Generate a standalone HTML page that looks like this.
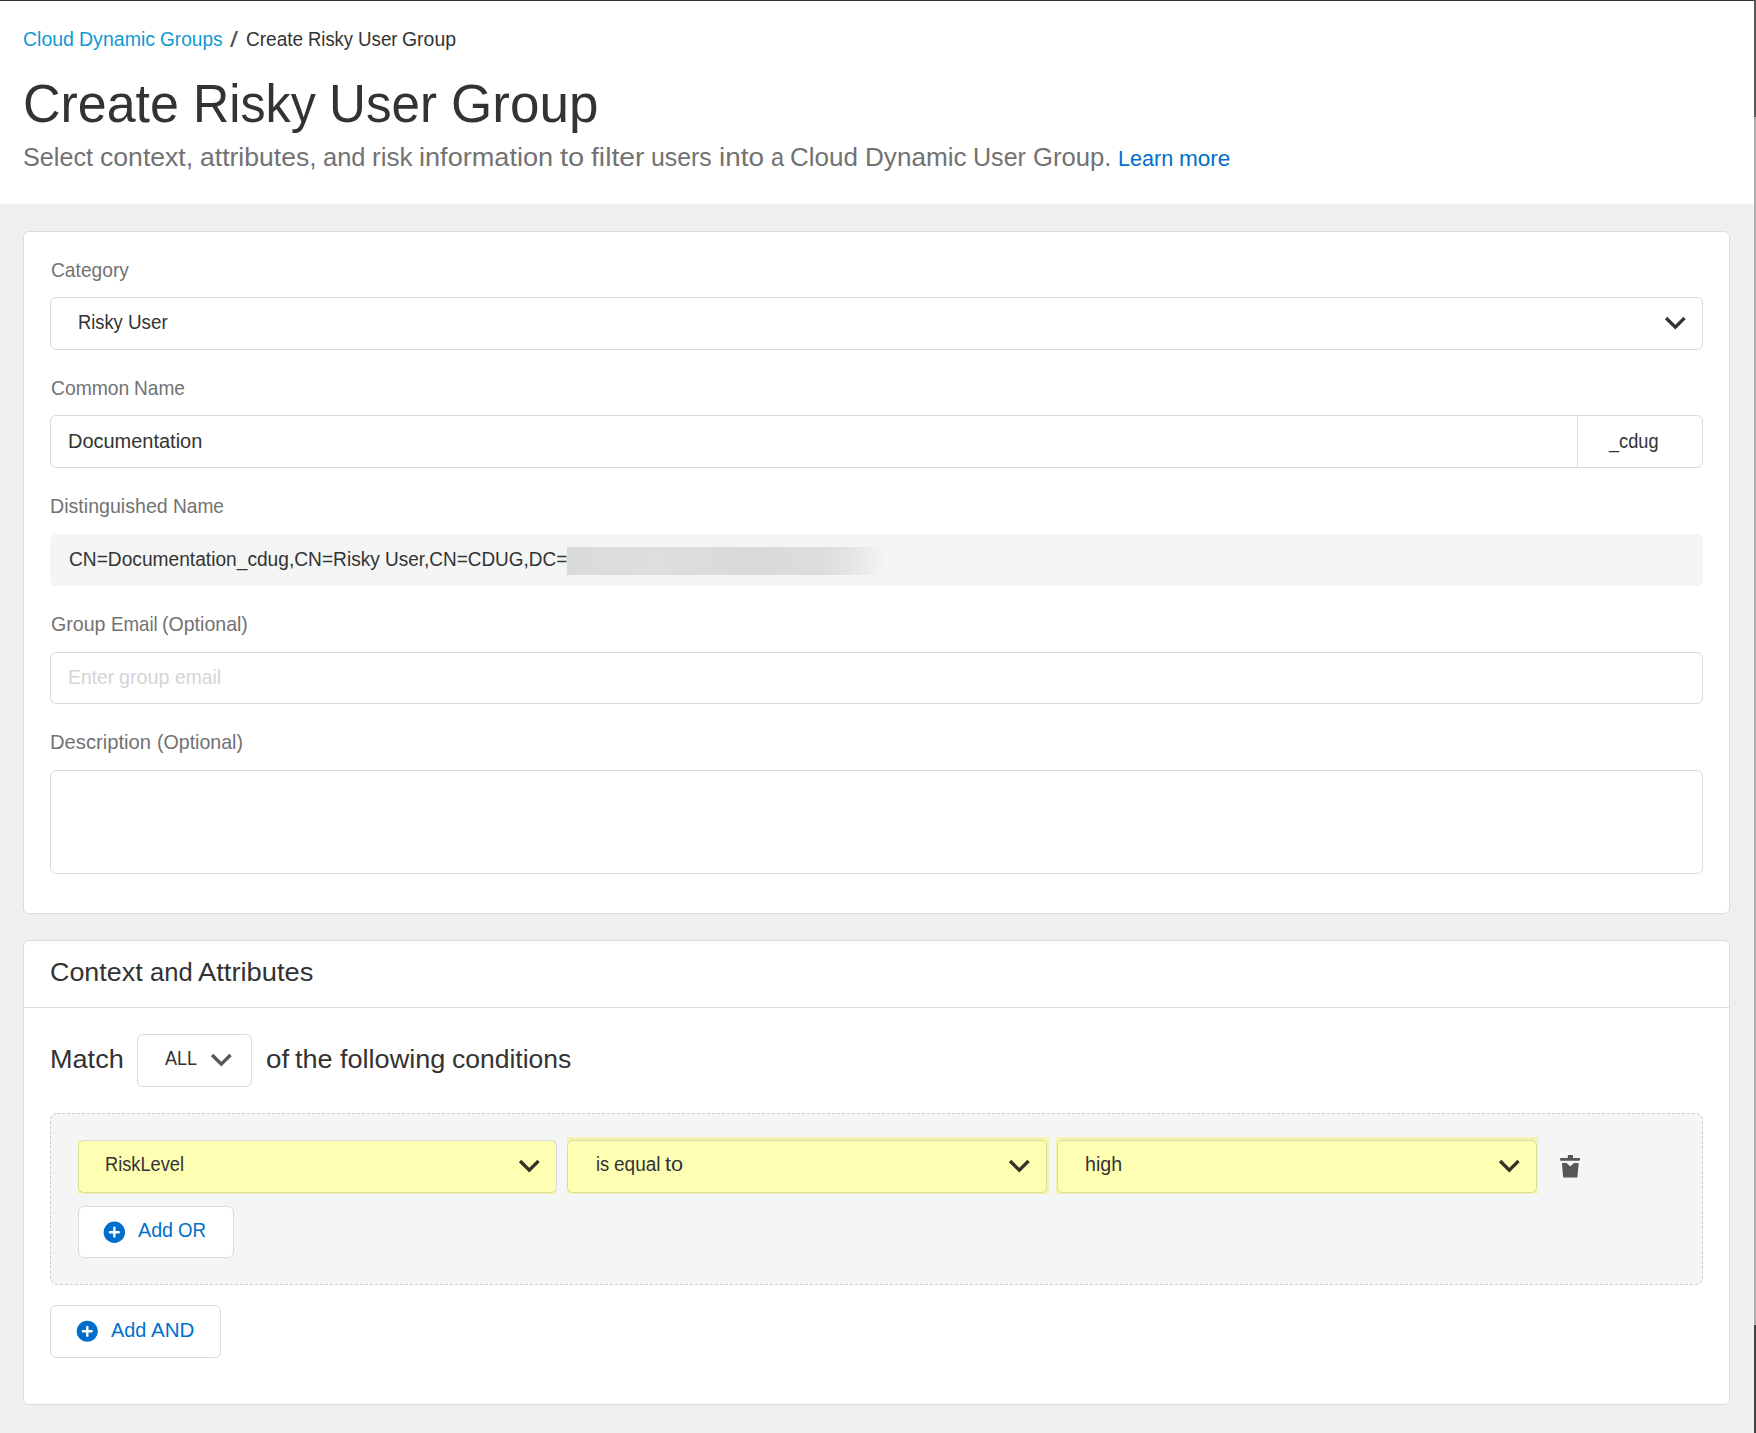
<!DOCTYPE html>
<html lang="en">
<head>
<meta charset="utf-8">
<title>Create Risky User Group</title>
<style>
  * { box-sizing: border-box; margin: 0; padding: 0; }
  html, body { width: 1756px; height: 1433px; overflow: hidden; }
  body { position: relative; background: #efefef; font-family: "Liberation Sans", sans-serif; color: #333; }
  .abs { position: absolute; }
  .t { position: absolute; white-space: nowrap; transform-origin: 0 50%; font-weight: 400; font-style: normal; text-decoration: none; }
  .w { position: absolute; top: 0; transform-origin: 0 50%; }

  /* window chrome */
  #topline { left: 0; top: 0; width: 1756px; height: 1px; background: #333; }
  #sb-top { left: 1754px; top: 0; width: 2px; height: 117px; background: #595959; }
  #sb-mid { left: 1754px; top: 117px; width: 2px; height: 1208px; background: #adadad; }
  #sb-edge { left: 1753px; top: 204px; width: 1px; height: 1229px; background: #f5f5f5; }
  #sb-bot { left: 1754px; top: 1325px; width: 2px; height: 108px; background: #3f4346; }

  /* header */
  #header { left: 0; top: 1px; width: 1754px; height: 203px; background: #fff; }

  /* cards */
  .card { background: #fff; border: 1px solid #dadddc; border-radius: 6px; }
  #card1 { left: 23px; top: 231px; width: 1707px; height: 683px; }
  #card2 { left: 23px; top: 940px; width: 1707px; height: 465px; }
  #card2sep { left: 24px; top: 1007px; width: 1705px; height: 1px; background: #dadddc; }

  .field { left: 50px; width: 1653px; background: #fff; border: 1px solid #d9dcdb; border-radius: 6px; }
  #f-cat { top: 297px; height: 53px; }
  #f-cn { top: 415px; height: 53px; }
  #f-cn-sep { left: 1577px; top: 416px; width: 1px; height: 51px; background: #d9dcdb; }
  #f-dn { top: 534px; height: 52px; background: #f4f5f5; border: none; }
  #dn-blur { left: 567px; top: 547px; width: 318px; height: 28px; background: linear-gradient(90deg, #d9dada 0%, #dddede 28%, #d8d9d9 58%, #dcdddd 80%, #e2e3e3 88%, #eceded 95%, #f4f5f5 100%); }
  #f-em { top: 652px; height: 52px; }
  #f-desc { top: 770px; height: 104px; }
  #f-all { left: 137px; top: 1034px; width: 115px; height: 53px; }

  .sel-chev { position: absolute; width: 22px; height: 14px; }
  .sel-chev path { fill: none; stroke: #333; stroke-width: 3.3; stroke-linecap: butt; stroke-linejoin: miter; }

  #cond { left: 50px; top: 1113px; width: 1653px; height: 172px; background: #f4f5f5; border-radius: 7px; }
  #cond-b { left: 50px; top: 1113px; width: 1653px; height: 172px; }
  .hl { background: #f4f4b0; }
  .ysel { background: #ffffb3; border: 1px solid #dcdc9a; border-radius: 6px; height: 53px; top: 1140px; width: 480px; }
  .btn { background: #fff; border: 1px solid #d9dcdb; border-radius: 6px; height: 53px; }
  .plus { position: absolute; width: 23px; height: 23px; }
</style>
</head>
<body>
  <!-- browser window edge / scrollbar -->
  <div class="abs" id="header"></div>
  <div class="abs" id="topline"></div>
  <div class="abs" id="sb-top"></div>
  <div class="abs" id="sb-mid"></div>
  <div class="abs" id="sb-bot"></div>
  <div class="abs" id="sb-edge"></div>

  <header>
    <nav>
      <a class="t" id="crumb1" href="#" style="left:0;top:27.00px;font-size:19.7px;line-height:24px;color:#1099d1"><span class="w" style="left:23.38px;transform:scaleX(0.9891)">Cloud</span> <span class="w" style="left:79.29px;transform:scaleX(0.9928)">Dynamic</span> <span class="w" style="left:160.36px;transform:scaleX(0.9695)">Groups</span></a>
      <span class="t" id="crumb2" style="left:0;top:28.00px;font-size:22px;line-height:24px;color:#4d4d4d"><span class="w" style="left:229.52px;transform:scaleX(1.2940)">/</span></span>
      <span class="t" id="crumb3" style="left:0;top:27.00px;font-size:19.7px;line-height:24px;color:#333"><span class="w" style="left:245.59px;transform:scaleX(0.9675)">Create</span> <span class="w" style="left:307.79px;transform:scaleX(0.9351)">Risky</span> <span class="w" style="left:357.82px;transform:scaleX(0.9519)">User</span> <span class="w" style="left:402.44px;transform:scaleX(0.9874)">Group</span></span>
    </nav>
      <h1 class="t" id="title" style="left:0;top:71.00px;font-size:53.6px;line-height:64px;color:#333"><span class="w" style="left:23.00px;transform:scaleX(0.9695)">Create</span> <span class="w" style="left:192.67px;transform:scaleX(0.9371)">Risky</span> <span class="w" style="left:329.16px;transform:scaleX(0.9544)">User</span> <span class="w" style="left:450.86px;transform:scaleX(0.9895)">Group</span></h1>
      <p class="t" id="sub" style="left:0;top:141.00px;font-size:26.25px;line-height:32px;color:#727272"><span class="w" style="left:23.10px;transform:scaleX(0.9600)">Select</span> <span class="w" style="left:99.86px;transform:scaleX(1.0132)">context,</span> <span class="w" style="left:199.73px;transform:scaleX(1.0111)">attributes,</span> <span class="w" style="left:323.01px;transform:scaleX(0.9685)">and</span> <span class="w" style="left:372.15px;transform:scaleX(0.9934)">risk</span> <span class="w" style="left:419.43px;transform:scaleX(1.0331)">information</span> <span class="w" style="left:560.30px;transform:scaleX(1.1073)">to</span> <span class="w" style="left:591.26px;transform:scaleX(1.0778)">filter</span> <span class="w" style="left:651.43px;transform:scaleX(0.9460)">users</span> <span class="w" style="left:718.88px;transform:scaleX(1.0630)">into</span> <span class="w" style="left:770.61px;transform:scaleX(0.8933)">a</span> <span class="w" style="left:790.38px;transform:scaleX(0.9909)">Cloud</span> <span class="w" style="left:865.06px;transform:scaleX(0.9948)">Dynamic</span> <span class="w" style="left:973.36px;transform:scaleX(0.9549)">User</span> <span class="w" style="left:1033.00px;transform:scaleX(0.9773)">Group.</span></p>
      <a class="t" id="learn" href="#" style="left:0;top:144.00px;font-size:22.9px;line-height:28px;color:#006fcc"><span class="w" style="left:1117.76px;transform:scaleX(0.9420)">Learn</span> <span class="w" style="left:1178.71px;transform:scaleX(0.9860)">more</span></a>
  </header>

  <main>
  <!-- card 1 : group details -->
  <section id="details">
    <div class="abs card" id="card1"></div>
    <div class="row">
      <label class="t" id="l-cat" style="left:0;top:258.00px;font-size:19.75px;line-height:24px;color:#727272"><span class="w" style="left:50.78px;transform:scaleX(0.9724)">Category</span></label>
      <div class="abs field" id="f-cat"></div>
      <span class="t" id="v-cat" style="left:0;top:310.00px;font-size:19.5px;line-height:24px;color:#333"><span class="w" style="left:77.83px;transform:scaleX(0.9384)">Risky</span> <span class="w" style="left:127.55px;transform:scaleX(0.9654)">User</span></span>
      <svg class="sel-chev" style="left:1664px;top:316px" viewBox="0 0 22 14"><path d="M2.07 1.97 L11.3 11.2 L20.53 1.97"/></svg>
    </div>
    <div class="row">
      <label class="t" id="l-cn" style="left:0;top:376.00px;font-size:19.75px;line-height:24px;color:#727272"><span class="w" style="left:50.59px;transform:scaleX(0.9775)">Common</span> <span class="w" style="left:133.93px;transform:scaleX(0.9658)">Name</span></label>
      <div class="abs field" id="f-cn"></div>
      <div class="abs" id="f-cn-sep"></div>
      <span class="t" id="v-cn" style="left:0;top:429.00px;font-size:19.5px;line-height:24px;color:#333"><span class="w" style="left:67.98px;transform:scaleX(1.0241)">Documentation</span></span>
      <span class="t" id="v-cdug" style="left:0;top:429.00px;font-size:19.5px;line-height:24px;color:#333"><span class="w" style="left:1609.20px;transform:scaleX(0.9323)">_cdug</span></span>
    </div>
    <div class="row">
      <label class="t" id="l-dn" style="left:0;top:494.00px;font-size:19.75px;line-height:24px;color:#727272"><span class="w" style="left:50.38px;transform:scaleX(0.9932)">Distinguished</span> <span class="w" style="left:173.17px;transform:scaleX(0.9680)">Name</span></label>
      <div class="abs field" id="f-dn"></div>
      <span class="t" id="v-dn" style="left:0;top:547.00px;font-size:19.5px;line-height:24px;color:#333"><span class="w" style="left:69.02px;transform:scaleX(0.9825)">CN=Documentation_cdug,CN=Risky</span> <span class="w" style="left:384.94px;transform:scaleX(0.9725)">User,CN=CDUG,DC=</span></span>
      <div class="abs" id="dn-blur"></div>
    </div>
    <div class="row">
      <label class="t" id="l-em" style="left:0;top:612.00px;font-size:19.75px;line-height:24px;color:#727272"><span class="w" style="left:51.00px;transform:scaleX(0.9933)">Group</span> <span class="w" style="left:110.59px;transform:scaleX(0.9471)">Email</span> <span class="w" style="left:162.43px;transform:scaleX(0.9902)">(Optional)</span></label>
      <div class="abs field" id="f-em"></div>
      <span class="t" id="v-em" style="left:0;top:665.00px;font-size:19.5px;line-height:24px;color:#d3d5d7"><span class="w" style="left:68.02px;transform:scaleX(0.9940)">Enter</span> <span class="w" style="left:119.40px;transform:scaleX(1.0109)">group</span> <span class="w" style="left:174.87px;transform:scaleX(0.9865)">email</span></span>
    </div>
    <div class="row">
      <label class="t" id="l-desc" style="left:0;top:730.00px;font-size:19.75px;line-height:24px;color:#727272"><span class="w" style="left:50.38px;transform:scaleX(1.0232)">Description</span> <span class="w" style="left:156.53px;transform:scaleX(0.9917)">(Optional)</span></label>
      <div class="abs field" id="f-desc"></div>
    </div>
  </section>

  <!-- card 2 : context and attributes -->
  <section id="context">
    <div class="abs card" id="card2"></div>
    <div class="abs" id="card2sep"></div>
      <h2 class="t" id="h-ctx" style="left:0;top:956.00px;font-size:26.4px;line-height:32px;color:#333"><span class="w" style="left:50.38px;transform:scaleX(1.0189)">Context</span> <span class="w" style="left:149.79px;transform:scaleX(0.9684)">and</span> <span class="w" style="left:198.31px;transform:scaleX(1.0346)">Attributes</span></h2>
    <div class="row">
      <span class="t" id="m1" style="left:0;top:1043.00px;font-size:26.1px;line-height:32px;color:#333"><span class="w" style="left:50.20px;transform:scaleX(1.0378)">Match</span></span>
      <div class="abs field" id="f-all"></div>
      <span class="t" id="v-all" style="left:0;top:1046.00px;font-size:19.5px;line-height:24px;color:#333"><span class="w" style="left:165.00px;transform:scaleX(0.9239)">ALL</span></span>
      <svg class="sel-chev" style="left:210px;top:1053px" viewBox="0 0 22 14"><path style="stroke:#575757" d="M2.07 1.97 L11.3 11.2 L20.53 1.97"/></svg>
      <span class="t" id="m2" style="left:0;top:1043.00px;font-size:26.1px;line-height:32px;color:#333"><span class="w" style="left:265.59px;transform:scaleX(1.0649)">of</span> <span class="w" style="left:295.45px;transform:scaleX(1.0391)">the</span> <span class="w" style="left:339.83px;transform:scaleX(1.0376)">following</span> <span class="w" style="left:451.87px;transform:scaleX(1.0145)">conditions</span></span>
    </div>

    <div class="group">
      <div class="abs" id="cond"></div>
      <svg class="abs" id="cond-b" viewBox="0 0 1653 172"><rect x="0.5" y="0.5" width="1652" height="171" rx="6.5" ry="6.5" fill="none" stroke="#cdcfce" stroke-width="1" stroke-dasharray="3 2"/></svg>
      <div class="abs hl" style="left:78px;top:1140px;width:478px;height:54px"></div>
      <div class="abs hl" style="left:567px;top:1137px;width:482px;height:57px"></div>
      <div class="abs hl" style="left:1056px;top:1137px;width:482px;height:57px"></div>
      <div class="abs ysel" style="left:78px;width:479px;border-top-color:#d6d8dc;border-right-color:#d6d8dc"></div>
      <span class="t" id="v-rl" style="left:0;top:1152.00px;font-size:19.5px;line-height:24px;color:#333"><span class="w" style="left:105.38px;transform:scaleX(0.9342)">RiskLevel</span></span>
      <svg class="sel-chev" style="left:518px;top:1159px" viewBox="0 0 22 14"><path style="stroke:#333326" d="M2.07 1.97 L11.3 11.2 L20.53 1.97"/></svg>
      <div class="abs ysel" style="left:567px"></div>
      <span class="t" id="v-eq" style="left:0;top:1152.00px;font-size:19.5px;line-height:24px;color:#333"><span class="w" style="left:595.72px;transform:scaleX(0.9334)">is</span> <span class="w" style="left:613.87px;transform:scaleX(0.9744)">equal</span> <span class="w" style="left:665.36px;transform:scaleX(1.1091)">to</span></span>
      <svg class="sel-chev" style="left:1008px;top:1159px" viewBox="0 0 22 14"><path style="stroke:#333326" d="M2.07 1.97 L11.3 11.2 L20.53 1.97"/></svg>
      <div class="abs ysel" style="left:1057px"></div>
      <span class="t" id="v-hi" style="left:0;top:1152.00px;font-size:19.5px;line-height:24px;color:#333"><span class="w" style="left:1085.02px;transform:scaleX(1.0045)">high</span></span>
      <svg class="sel-chev" style="left:1498px;top:1159px" viewBox="0 0 22 14"><path style="stroke:#333326" d="M2.07 1.97 L11.3 11.2 L20.53 1.97"/></svg>
      <svg class="abs" id="trash" style="left:1560px;top:1155px;width:20px;height:23px" viewBox="0 0 20 23"><path fill="#575757" d="M7.8 .7a.6.6 0 0 1 .6-.6h4a.6.6 0 0 1 .6.6V3h6.2a.8.8 0 0 1 .8.8v1.2a.8.8 0 0 1-.8.8H.9a.8.8 0 0 1-.8-.8V3.8a.8.8 0 0 1 .8-.8h6.9z M1.9 7.9H6.6L10.3 11.5 14 7.9h4.7L17.4 21.8a.9.9 0 0 1-.9.8H4a.9.9 0 0 1-.9-.8z"/></svg>

      <div class="abs btn" style="left:78px;top:1206px;width:156px;height:52px"></div>
      <svg class="plus" style="left:103px;top:1221px" viewBox="0 0 23 23"><circle cx="11.35" cy="11.2" r="10.7" fill="#006fcc"/><path d="M11.35 6.8v8.8M6.95 11.2h8.8" stroke="#fff" stroke-width="2.4" stroke-linecap="round"/></svg>
      <span class="t" id="b-or" style="left:0;top:1218.00px;font-size:19.6px;line-height:24px;color:#006fcc"><span class="w" style="left:138.19px;transform:scaleX(1.0050)">Add</span> <span class="w" style="left:178.25px;transform:scaleX(0.9530)">OR</span></span>
    </div>

    <div class="abs btn" style="left:50px;top:1305px;width:171px"></div>
    <svg class="plus" style="left:76px;top:1320px" viewBox="0 0 23 23"><circle cx="11.3" cy="11.25" r="10.6" fill="#006fcc"/><path d="M11.3 6.85v8.8M6.9 11.25h8.8" stroke="#fff" stroke-width="2.4" stroke-linecap="round"/></svg>
      <span class="t" id="b-and" style="left:0;top:1318.00px;font-size:19.6px;line-height:24px;color:#006fcc"><span class="w" style="left:111.19px;transform:scaleX(1.0109)">Add</span> <span class="w" style="left:150.82px;transform:scaleX(1.0499)">AND</span></span>
  </section>
  </main>
</body>
</html>
